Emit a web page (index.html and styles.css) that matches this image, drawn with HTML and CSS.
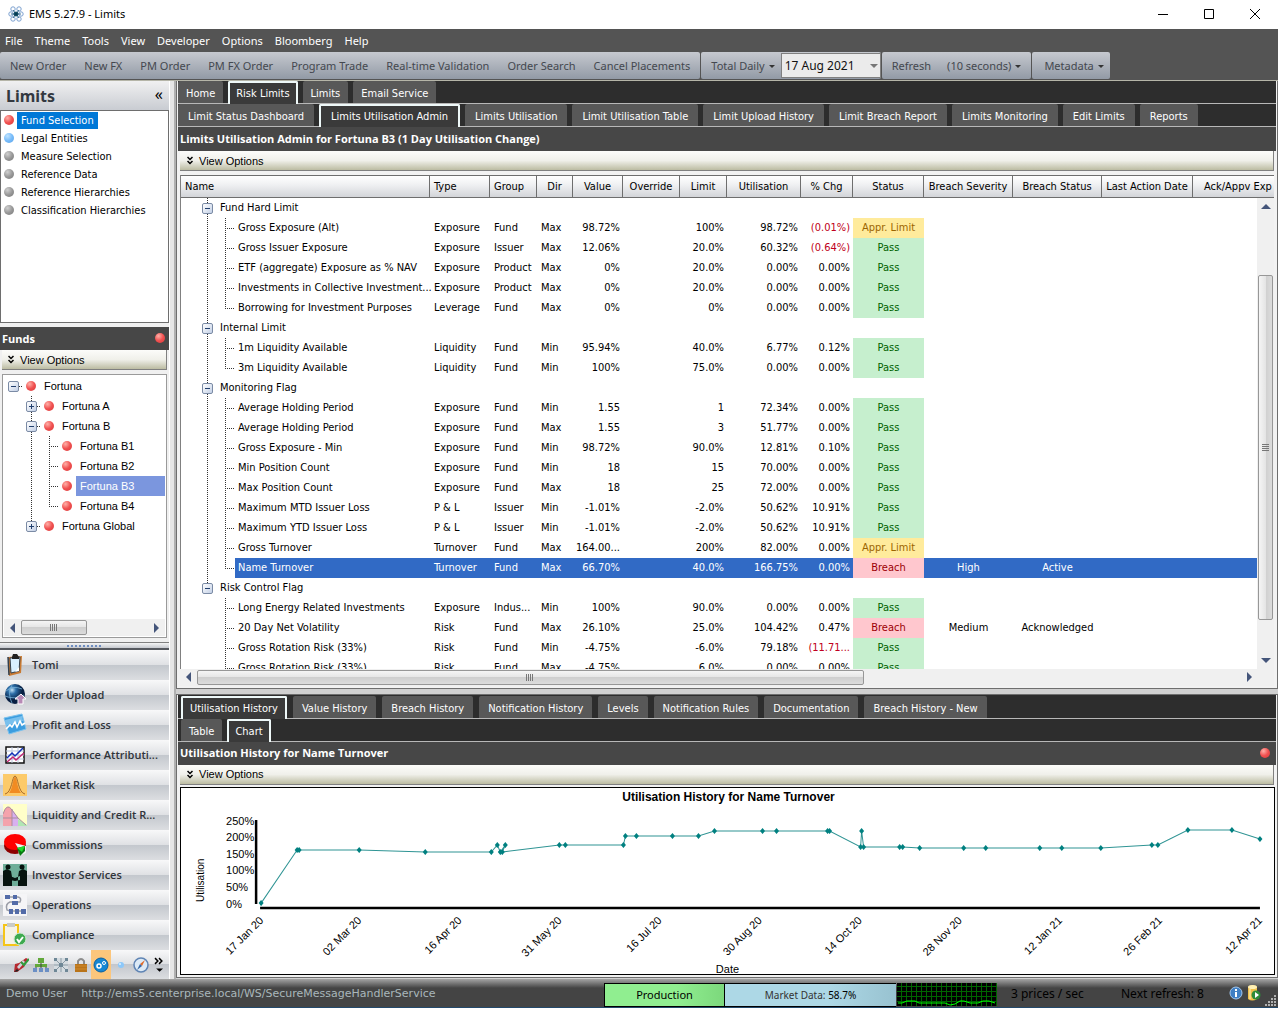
FILE: index.html
```html
<!DOCTYPE html>
<html lang="en">
<head>
    <meta charset="UTF-8">
    <meta name="viewport" content="width=device-width, initial-scale=1.0">
    <title>EMS 5.27.9 - Limits</title>
    <link rel="stylesheet" href="styles.css">
</head>
<body>
<div class="app">
    <header class="titlebar">
        <svg class="app-icon" width="16" height="16" viewBox="0 0 16 16" fill="#fff" stroke="#7ba0cf">
            <circle cx="5" cy="3" r="2.2"/><circle cx="11" cy="3" r="2.2"/><circle cx="3" cy="8" r="2.2"/>
            <circle cx="13" cy="8" r="2.2"/><circle cx="5" cy="13" r="2.2"/><circle cx="11" cy="13" r="2.2"/>
            <path d="M5 4l6 8M11 4l-6 8M3 8h10" stroke="#3d7191"/><circle cx="8" cy="8" r="2" fill="#053b52" stroke="#0c4a63"/>
        </svg>
        <span class="window-title">EMS 5.27.9 - Limits</span>
        <button class="win-btn" aria-label="Minimize"><svg width="10" height="10"><path d="M0 5.5h10" stroke="#000"/></svg></button>
        <button class="win-btn" aria-label="Maximize"><svg width="10" height="10"><path d="M.5.5h9v9h-9z" fill="none" stroke="#000"/></svg></button>
        <button class="win-btn" aria-label="Close"><svg width="10" height="10"><path d="M0 0l10 10M10 0L0 10" stroke="#000"/></svg></button>
    </header>

    <nav class="menubar">
        <button>File</button><button>Theme</button><button>Tools</button><button>View</button><button>Developer</button><button>Options</button><button>Bloomberg</button><button>Help</button>
    </nav>

    <div class="toolbar">
        <div class="tool-group tool-orders">
            <button>New Order</button><button>New FX</button><button>PM Order</button><button>PM FX Order</button><button>Program Trade</button><button>Real-time Validation</button><button>Order Search</button><button>Cancel Placements</button>
        </div>
        <div class="tool-group tool-date">
            <button class="drop">Total Daily</button>
            <span class="date-box"><select aria-label="Date"><option>17 Aug 2021</option></select></span>
        </div>
        <div class="tool-group">
            <button>Refresh</button><button class="drop">(10 seconds)</button>
        </div>
        <div class="tool-group">
            <button class="drop">Metadata</button>
        </div>
    </div>

    <div class="workspace">
        <aside class="sidebar">
            <div class="side-head"><h1>Limits</h1><button aria-label="Collapse">«</button></div>
            <ul class="side-list">
                <li><i class="dot red"></i><a href="#" class="selected">Fund Selection</a></li>
                <li><i class="dot blue"></i><a href="#">Legal Entities</a></li>
                <li><i class="dot"></i><a href="#">Measure Selection</a></li>
                <li><i class="dot"></i><a href="#">Reference Data</a></li>
                <li><i class="dot"></i><a href="#">Reference Hierarchies</a></li>
                <li><i class="dot"></i><a href="#">Classification Hierarchies</a></li>
            </ul>
            <div class="panel-title funds-title"><h2>Funds</h2><i class="dot red"></i></div>
            <button class="view-options"><svg width="6" height="9" viewBox="0 0 6 9"><path d="M.5 1L3 3.500 5.500 1M.5 5L3 7.500 5.500 5" fill="none" stroke="#000" stroke-width="1.500"/></svg>View Options</button>
            <div class="fund-box">
                <ul class="fund-tree">
                    <li><i class="box"></i><i class="stub"></i><i class="dot red"></i><span>Fortuna</span></li>
                    <li class="sub"><i class="pad"></i><i class="box plus"></i><i class="stub"></i><i class="dot red"></i><span>Fortuna A</span></li>
                    <li class="sub"><i class="pad"></i><i class="box"></i><i class="stub"></i><i class="dot red"></i><span>Fortuna B</span></li>
                    <li class="sub"><i class="pad deep"></i><i class="twig"></i><i class="dot red"></i><span>Fortuna B1</span></li>
                    <li class="sub"><i class="pad deep"></i><i class="twig"></i><i class="dot red"></i><span>Fortuna B2</span></li>
                    <li class="sub"><i class="pad deep"></i><i class="twig"></i><i class="dot red"></i><span class="selected">Fortuna B3</span></li>
                    <li class="sub"><i class="pad deep"></i><i class="twig end"></i><i class="dot red"></i><span>Fortuna B4</span></li>
                    <li class="sub last"><i class="pad"></i><i class="box plus"></i><i class="stub"></i><i class="dot red"></i><span>Fortuna Global</span></li>
                </ul>
                <div class="hscroll fund-scroll">
                    <button class="arrow left" aria-label="Scroll left"></button><div class="thumb"></div><div class="rest"></div><button class="arrow right" aria-label="Scroll right"></button>
                </div>
            </div>
            <div class="side-grip"></div>
            <nav class="modules">
                <a href="#"><svg viewBox="0 0 24 24"><path d="M5 4l14-1-1 17-12 3z" fill="#c97a32"/><path d="M7 5l10-1-1 14-8 2z" fill="#d9efff" stroke="#33404e"/><path d="M5 4l1 18" fill="none" stroke="#33404e" stroke-width="1.500"/><path d="M9 4l1-3h4l2 3v2H9z" fill="#222"/><path d="M12 19l4-5v4z" fill="#fff"/></svg>Tomi</a>
                <a href="#"><svg viewBox="0 0 24 24"><defs><radialGradient id="globe" cx=".35" cy=".3"><stop offset="0" stop-color="#c5e4f7"/><stop offset=".4" stop-color="#2c6ea8"/><stop offset="1" stop-color="#081f42"/></radialGradient></defs><circle cx="12" cy="11" r="10" fill="url(#globe)"/><path d="M3 8q7-6 16-2M2 13q9 4 19-1M9 2q-5 8 0 18" fill="none" stroke="#79b2d8" stroke-width=".8"/><path d="M18 11l5 5h-3v5h-5v-5h-3z" fill="#b789b5" stroke="#fff"/></svg>Order Upload</a>
                <a href="#"><svg viewBox="0 0 24 24"><path d="M1 5l18-4 4 15-17 5z" fill="#3c9ddf" stroke="#7cc2ee"/><path d="M2 7l17-4 1 5L3 13z" fill="#79c0ed"/><path d="M3 16l4-4 2 2 3-5 2 5 3-6 2 4 3-2" fill="none" stroke="#fff" stroke-width="1.600"/></svg>Profit and Loss</a>
                <a href="#"><svg viewBox="0 0 24 24"><path d="M3 4h18v16H3z" fill="#fff" stroke="#111" stroke-width="1.500"/><path d="M3 8h18M3 12h18M3 16h18M9 4v16M15 4v16" stroke="#b9c4dd"/><path d="M4 15l5-5 3 3 8-8" fill="none" stroke="#1231b8" stroke-width="1.500"/><path d="M4 19l6-5 3 3 8-7" fill="none" stroke="#c12672" stroke-width="1.500"/></svg>Performance Attributi...</a>
                <a href="#"><svg viewBox="0 0 24 24"><path d="M0 1h24v22H0z" fill="#fcca6a"/><path d="M6 20C10 15 10 4 12 4s2 11 6 16z" fill="#f18b22"/><path d="M2 21C9 20 9 3 12 3s3 17 10 18" fill="none" stroke="#a86a28"/></svg>Market Risk</a>
                <a href="#"><svg viewBox="0 0 24 24"><path d="M0 1h24v22H0z" fill="#ffffc9"/><path d="M0 23V11q4-12 9-4v16z" fill="#f4a3ac"/><path d="M9 23V6l6 9v8z" fill="#d8b0f0"/><path d="M15 23v-7l9 6v1z" fill="#b1e6b3"/><path d="M0 11q4-12 9-4l6 8 8 7M0 15h15M9 6v17" fill="none" stroke="#a98d9d"/></svg>Liquidity and Credit R...</a>
                <a href="#"><svg viewBox="0 0 24 24"><ellipse cx="12" cy="13" rx="11" ry="8" fill="#8d0000"/><ellipse cx="12" cy="9" rx="11" ry="8" fill="#f00"/><path d="M12 10l11 3v7l-7 3-1-8z" fill="#f0f0f1"/><path d="M14 15l8-2v5l-5 5z" fill="#0a7a12"/><path d="M14 15l8-2-3 6z" fill="#22d82c"/></svg>Commissions</a>
                <a href="#"><svg viewBox="0 0 24 24"><path d="M0 1h24v22H0z" fill="#6fae99"/><g fill="#07130f"><circle cx="5" cy="4" r="2.500"/><circle cx="19" cy="4" r="2.500"/><path d="M0 8l4-2 4 2 1 6v9H0zM24 8l-4-2-4 2-1 6v9h9zM7 13l5 2 5-2v4l-5 1-5-1z"/></g></svg>Investor Services</a>
                <a href="#"><svg viewBox="0 0 24 24"><path d="M0 1h24v22H0z" fill="#f5f5f7"/><path d="M3 4h12q4 1 2 5H7q-5 2-3 8l3 1h14" fill="none" stroke="#9b9ea7" stroke-width="1.500"/><path d="M2 2h5v4H2zM10 2h4v4h-4zM9 8h6v4H9zM6 16h4v5H6zM12 16h4v5h-4zM18 16h5v5h-5z" fill="#526ba8"/></svg>Operations</a>
                <a href="#"><svg viewBox="0 0 24 24"><path d="M1 2h14v20H1z" fill="#f5f2e6" stroke="#f5c518" stroke-width="2"/><path d="M4 0h8v4H4z" fill="#c9cbc8"/><circle cx="17" cy="16" r="6" fill="#3eaa50" stroke="#cfe8d1"/><path d="M14 16l2 3 4-5" fill="none" stroke="#fff" stroke-width="2"/></svg>Compliance</a>
            </nav>
            <div class="module-strip">
                <button aria-label="Launch"><svg viewBox="0 0 16 16"><path d="M1 15l1-8 4-1 7-5 2 1-4 8-7 5z" fill="#b52a30"/><path d="M4 10l6-7 2 2-6 7z" fill="#cfd3da"/><path d="M8 5l3 3 5-6" fill="none" stroke="#2e9d3c" stroke-width="2"/><path d="M1 15l3-3 2 2z" fill="#222"/></svg></button>
                <button aria-label="Hierarchy"><svg viewBox="0 0 16 16"><path d="M5 1h6v5H5zM2 7h12v3H2z" fill="#62a83b"/><path d="M8 6v5M3 10v3M13 10v3" stroke="#444"/><path d="M0 11h4v4H0zM6 11h4v4H6zM12 11h4v4h-4z" fill="#6b8fc5"/></svg></button>
                <button aria-label="Network"><svg viewBox="0 0 16 16"><path d="M1 1h14v14H1z" fill="#d5dce1"/><path d="M2 2l12 12M14 2L2 14M8 1v14M1 8h14" stroke="#8b9ba5"/><path d="M1 1h3v3H1zM12 1h3v3h-3zM1 12h3v3H1zM12 12h3v3h-3zM6 6h4v4H6z" fill="#6e8796"/></svg></button>
                <button aria-label="Lock"><svg viewBox="0 0 16 16"><path d="M5 8V4q3-4 6 0v4" fill="none" stroke="#8d8d8d" stroke-width="2"/><path d="M2 7h12v8H2z" fill="#b9741a"/><path d="M2 9h12M2 12h12" stroke="#d08a2c"/></svg></button>
                <button class="active" aria-label="Settings"><svg viewBox="0 0 16 16"><circle cx="8" cy="8" r="7" fill="#1687d3" stroke="#0a5fa0"/><circle cx="6" cy="9" r="2" fill="none" stroke="#fff" stroke-width="1.500"/><circle cx="11" cy="6" r="1.500" fill="none" stroke="#fff"/></svg></button>
                <button aria-label="Status"><svg viewBox="0 0 16 16"><circle cx="8" cy="8" r="3" fill="#8cc8fa"/><circle cx="7" cy="7" r="1" fill="#dcf0ff"/></svg></button>
                <button aria-label="Compass"><svg viewBox="0 0 16 16"><circle cx="8" cy="8" r="7" fill="#dceaf6" stroke="#5f84b4" stroke-width="1.500"/><path d="M12 3L9 9 7 7z" fill="#e06b2a"/><path d="M4 13l3-6 2 2z" fill="#3568a8"/></svg></button>
                <button class="more" aria-label="More"><svg viewBox="0 0 8 14"><path d="M.5 1L3 3.500.5 6M4 1l2.500 2.500L4 6" fill="none" stroke="#000" stroke-width="1.300"/><path d="M1.500 10h6L4.500 13z"/></svg></button>
            </div>
        </aside>

        <div class="splitter"></div>

        <main class="content">
            <section class="panel grid-panel">
                <nav class="tabs narrow">
                    <button>Home</button><button class="current">Risk Limits</button><button>Limits</button><button>Email Service</button>
                </nav>
                <nav class="tabs wide">
                    <button>Limit Status Dashboard</button><button class="current">Limits Utilisation Admin</button><button>Limits Utilisation</button><button>Limit Utilisation Table</button><button>Limit Upload History</button><button>Limit Breach Report</button><button>Limits Monitoring</button><button>Edit Limits</button><button>Reports</button>
                </nav>
                <div class="panel-title"><h2>Limits Utilisation Admin for Fortuna B3 (1 Day Utilisation Change)</h2></div>
                <button class="view-options"><svg width="6" height="9" viewBox="0 0 6 9"><path d="M.5 1L3 3.500 5.500 1M.5 5L3 7.500 5.500 5" fill="none" stroke="#000" stroke-width="1.500"/></svg>View Options</button>
                <div class="grid-wrap">
                    <table class="grid">
                        <colgroup><col class="c-name"><col class="c-type"><col class="c-group"><col class="c-dir"><col class="c-value"><col class="c-over"><col class="c-limit"><col class="c-util"><col class="c-chg"><col class="c-status"><col class="c-sev"><col class="c-sev"><col class="c-date"><col></colgroup>
                        <thead>
                            <tr><th>Name</th><th>Type</th><th>Group</th><th>Dir</th><th>Value</th><th>Override</th><th>Limit</th><th>Utilisation</th><th>% Chg</th><th>Status</th><th>Breach Severity</th><th>Breach Status</th><th>Last Action Date</th><th>Ack/Appv Exp</th></tr>
                        </thead>
                        <tbody>
                            <tr class="group"><td colspan="14"><i class="trunk"><i class="box"></i></i>Fund Hard Limit</td></tr>
                            <tr><td><i class="trunk"></i><i class="twig"></i>Gross Exposure (Alt)</td><td>Exposure</td><td>Fund</td><td>Max</td><td>98.72%</td><td></td><td>100%</td><td>98.72%</td><td class="neg">(0.01%)</td><td class="appr">Appr. Limit</td><td></td><td></td><td></td><td></td></tr>
                            <tr><td><i class="trunk"></i><i class="twig"></i>Gross Issuer Exposure</td><td>Exposure</td><td>Issuer</td><td>Max</td><td>12.06%</td><td></td><td>20.0%</td><td>60.32%</td><td class="neg">(0.64%)</td><td class="pass">Pass</td><td></td><td></td><td></td><td></td></tr>
                            <tr><td><i class="trunk"></i><i class="twig"></i>ETF (aggregate) Exposure as % NAV</td><td>Exposure</td><td>Product</td><td>Max</td><td>0%</td><td></td><td>20.0%</td><td>0.00%</td><td>0.00%</td><td class="pass">Pass</td><td></td><td></td><td></td><td></td></tr>
                            <tr><td><i class="trunk"></i><i class="twig"></i>Investments in Collective Investment...</td><td>Exposure</td><td>Product</td><td>Max</td><td>0%</td><td></td><td>20.0%</td><td>0.00%</td><td>0.00%</td><td class="pass">Pass</td><td></td><td></td><td></td><td></td></tr>
                            <tr><td><i class="trunk"></i><i class="twig end"></i>Borrowing for Investment Purposes</td><td>Leverage</td><td>Fund</td><td>Max</td><td>0%</td><td></td><td>0%</td><td>0.00%</td><td>0.00%</td><td class="pass">Pass</td><td></td><td></td><td></td><td></td></tr>
                            <tr class="group"><td colspan="14"><i class="trunk"><i class="box"></i></i>Internal Limit</td></tr>
                            <tr><td><i class="trunk"></i><i class="twig"></i>1m Liquidity Available</td><td>Liquidity</td><td>Fund</td><td>Min</td><td>95.94%</td><td></td><td>40.0%</td><td>6.77%</td><td>0.12%</td><td class="pass">Pass</td><td></td><td></td><td></td><td></td></tr>
                            <tr><td><i class="trunk"></i><i class="twig end"></i>3m Liquidity Available</td><td>Liquidity</td><td>Fund</td><td>Min</td><td>100%</td><td></td><td>75.0%</td><td>0.00%</td><td>0.00%</td><td class="pass">Pass</td><td></td><td></td><td></td><td></td></tr>
                            <tr class="group"><td colspan="14"><i class="trunk"><i class="box"></i></i>Monitoring Flag</td></tr>
                            <tr><td><i class="trunk"></i><i class="twig"></i>Average Holding Period</td><td>Exposure</td><td>Fund</td><td>Min</td><td>1.55</td><td></td><td>1</td><td>72.34%</td><td>0.00%</td><td class="pass">Pass</td><td></td><td></td><td></td><td></td></tr>
                            <tr><td><i class="trunk"></i><i class="twig"></i>Average Holding Period</td><td>Exposure</td><td>Fund</td><td>Max</td><td>1.55</td><td></td><td>3</td><td>51.77%</td><td>0.00%</td><td class="pass">Pass</td><td></td><td></td><td></td><td></td></tr>
                            <tr><td><i class="trunk"></i><i class="twig"></i>Gross Exposure - Min</td><td>Exposure</td><td>Fund</td><td>Min</td><td>98.72%</td><td></td><td>90.0%</td><td>12.81%</td><td>0.10%</td><td class="pass">Pass</td><td></td><td></td><td></td><td></td></tr>
                            <tr><td><i class="trunk"></i><i class="twig"></i>Min Position Count</td><td>Exposure</td><td>Fund</td><td>Min</td><td>18</td><td></td><td>15</td><td>70.00%</td><td>0.00%</td><td class="pass">Pass</td><td></td><td></td><td></td><td></td></tr>
                            <tr><td><i class="trunk"></i><i class="twig"></i>Max Position Count</td><td>Exposure</td><td>Fund</td><td>Max</td><td>18</td><td></td><td>25</td><td>72.00%</td><td>0.00%</td><td class="pass">Pass</td><td></td><td></td><td></td><td></td></tr>
                            <tr><td><i class="trunk"></i><i class="twig"></i>Maximum MTD Issuer Loss</td><td>P &amp; L</td><td>Issuer</td><td>Min</td><td>-1.01%</td><td></td><td>-2.0%</td><td>50.62%</td><td>10.91%</td><td class="pass">Pass</td><td></td><td></td><td></td><td></td></tr>
                            <tr><td><i class="trunk"></i><i class="twig"></i>Maximum YTD Issuer Loss</td><td>P &amp; L</td><td>Issuer</td><td>Min</td><td>-1.01%</td><td></td><td>-2.0%</td><td>50.62%</td><td>10.91%</td><td class="pass">Pass</td><td></td><td></td><td></td><td></td></tr>
                            <tr><td><i class="trunk"></i><i class="twig"></i>Gross Turnover</td><td>Turnover</td><td>Fund</td><td>Max</td><td>164.00...</td><td></td><td>200%</td><td>82.00%</td><td>0.00%</td><td class="appr">Appr. Limit</td><td></td><td></td><td></td><td></td></tr>
                            <tr class="selected"><td><i class="trunk"></i><i class="twig end"></i>Name Turnover</td><td>Turnover</td><td>Fund</td><td>Max</td><td>66.70%</td><td></td><td>40.0%</td><td>166.75%</td><td>0.00%</td><td class="breach">Breach</td><td>High</td><td>Active</td><td></td><td></td></tr>
                            <tr class="group"><td colspan="14"><i class="trunk end"><i class="box"></i></i>Risk Control Flag</td></tr>
                            <tr><td><i class="trunk none"></i><i class="twig"></i>Long Energy Related Investments</td><td>Exposure</td><td>Indus...</td><td>Min</td><td>100%</td><td></td><td>90.0%</td><td>0.00%</td><td>0.00%</td><td class="pass">Pass</td><td></td><td></td><td></td><td></td></tr>
                            <tr><td><i class="trunk none"></i><i class="twig"></i>20 Day Net Volatility</td><td>Risk</td><td>Fund</td><td>Max</td><td>26.10%</td><td></td><td>25.0%</td><td>104.42%</td><td>0.47%</td><td class="breach">Breach</td><td>Medium</td><td>Acknowledged</td><td></td><td></td></tr>
                            <tr><td><i class="trunk none"></i><i class="twig"></i>Gross Rotation Risk (33%)</td><td>Risk</td><td>Fund</td><td>Min</td><td>-4.75%</td><td></td><td>-6.0%</td><td>79.18%</td><td class="neg">(11.71...</td><td class="pass">Pass</td><td></td><td></td><td></td><td></td></tr>
                            <tr><td><i class="trunk none"></i><i class="twig"></i>Gross Rotation Risk (33%)</td><td>Risk</td><td>Fund</td><td>Max</td><td>-4.75%</td><td></td><td>6.0%</td><td>0.00%</td><td>0.00%</td><td class="pass">Pass</td><td></td><td></td><td></td><td></td></tr>
                        </tbody>
                    </table>
                    <div class="vscroll">
                        <button class="arrow up" aria-label="Scroll up"></button><div class="before"></div><div class="thumb"></div><div class="rest"></div><button class="arrow down" aria-label="Scroll down"></button>
                    </div>
                </div>
                <div class="hscroll grid-scroll">
                    <button class="arrow left" aria-label="Scroll left"></button><div class="thumb"></div><div class="rest"></div><button class="arrow right" aria-label="Scroll right"></button>
                </div>
            </section>

            <section class="panel chart-panel">
                <nav class="tabs">
                    <button class="current">Utilisation History</button><button>Value History</button><button>Breach History</button><button>Notification History</button><button>Levels</button><button>Notification Rules</button><button>Documentation</button><button>Breach History - New</button>
                </nav>
                <nav class="tabs narrow">
                    <button>Table</button><button class="current">Chart</button>
                </nav>
                <div class="panel-title"><h2>Utilisation History for Name Turnover</h2><i class="dot red"></i></div>
                <button class="view-options"><svg width="6" height="9" viewBox="0 0 6 9"><path d="M.5 1L3 3.500 5.500 1M.5 5L3 7.500 5.500 5" fill="none" stroke="#000" stroke-width="1.500"/></svg>View Options</button>
                <div class="chart-box">
                    <svg class="chart" viewBox="0 0 1092 186">
                        <defs><marker id="pt" markerWidth="6" markerHeight="6" refX="3" refY="3" markerUnits="userSpaceOnUse"><path d="M3 0l2.500 3L3 6 .5 3z" fill="#008080"/></marker></defs>
                        <text class="chart-title" x="547" y="13" text-anchor="middle">Utilisation History for Name Turnover</text>
                        <text x="45" y="37">250%</text>
                        <text x="45" y="53">200%</text>
                        <text x="45" y="70">150%</text>
                        <text x="45" y="86">100%</text>
                        <text x="45" y="103">50%</text>
                        <text x="45" y="120">0%</text>
                        <text class="axis-title" transform="translate(23 114) rotate(-90)">Utilisation</text>
                        <path d="M75 32v84M79 120h999" stroke="#000" stroke-width="2.500" fill="none"/>
                        <polyline class="series" points="80,115 116,62 118,62 178,62 244,64 310,64 316,57 319,64 324,57 321,64 378,57 384,57 442,57 444,48 455,48 491,48 517,48 533,43 581,43 595,43 646,43 648,43 679,59 680,43 682,59 718,59 721,59 738,60 782,60 804,60 858,60 880,60 919,60 970,57 976,57 1006,42 1050,42 1078,51"/>
                        <g class="dates" text-anchor="end">
                            <text transform="translate(83 133) rotate(-45)">17 Jan 20</text>
                            <text transform="translate(181 133) rotate(-45)">02 Mar 20</text>
                            <text transform="translate(281 133) rotate(-45)">16 Apr 20</text>
                            <text transform="translate(381 133) rotate(-45)">31 May 20</text>
                            <text transform="translate(481 133) rotate(-45)">16 Jul 20</text>
                            <text transform="translate(581 133) rotate(-45)">30 Aug 20</text>
                            <text transform="translate(681 133) rotate(-45)">14 Oct 20</text>
                            <text transform="translate(781 133) rotate(-45)">28 Nov 20</text>
                            <text transform="translate(881 133) rotate(-45)">12 Jan 21</text>
                            <text transform="translate(981 133) rotate(-45)">26 Feb 21</text>
                            <text transform="translate(1081 133) rotate(-45)">12 Apr 21</text>
                        </g>
                        <text x="546" y="185" text-anchor="middle">Date</text>
                    </svg>
                </div>
            </section>
        </main>
    </div>

    <footer class="statusbar">
        <span class="user">Demo User</span>
        <span class="url">http://ems5.centerprise.local/WS/SecureMessageHandlerService</span>
        <span class="env">Production</span>
        <span class="market">Market Data: <b>58.7%</b></span>
        <svg class="spark" width="100" height="23" viewBox="0 0 100 23">
            <defs><pattern id="mesh" width="5" height="5" patternUnits="userSpaceOnUse"><path d="M4.500 0v5M0 3.500h5" stroke="#006400"/></pattern></defs>
            <path d="M0 0h100v23H0z"/><path d="M0 0h100v23H0z" fill="url(#mesh)"/>
            <path d="M1 20h4l5-2h8l4 2h26l5 2 5-1 5-3h4l6 2h8l5-2h6l6 2" fill="none" stroke="#0f0"/>
        </svg>
        <span class="prices">3 prices / sec</span>
        <span class="refresh">Next refresh: 8</span>
        <svg class="info" width="14" height="14" viewBox="0 0 14 14"><circle cx="7" cy="7" r="6" fill="#3f7fc4" stroke="#a5c8ee"/><path d="M7 3v2M7 6v5" stroke="#fff" stroke-width="2"/></svg>
        <svg class="feed" width="14" height="18" viewBox="0 0 14 18"><path d="M1 3q5-4 9 0v12q-5 3-9 0z" fill="#f0c14b"/><ellipse cx="5.500" cy="3" rx="4.500" ry="2" fill="#fff0b5"/><path d="M3 5v10" stroke="#fff3c2"/><circle cx="9" cy="11" r="4.500" fill="#2e8b3a"/><path d="M8 8l4 3-4 3z" fill="#fff"/></svg>
        <svg class="grip" width="12" height="12" viewBox="0 0 12 12" fill="#b0b0b0"><path d="M9 0h2v2H9zM9 3h2v2H9zM6 3h2v2H6zM9 6h2v2H9zM6 6h2v2H6zM3 6h2v2H3zM9 9h2v2H9zM6 9h2v2H6zM3 9h2v2H3zM0 9h2v2H0z"/></svg>
    </footer>
</div>
</body>
</html>
```
FILE: styles.css
```css
* {
    box-sizing: border-box;
}

body {
    margin: 0;
    background-color: #fff;
    color: #000;
    font-family: "DejaVu Sans Condensed", "DejaVu Sans", sans-serif;
    font-size: 11px;
}

button {
    border: none;
    background: none;
    padding: 0;
    margin: 0;
    color: inherit;
    font: inherit;
    white-space: nowrap;
}

a {
    color: inherit;
    text-decoration: none;
}

h1, h2, ul {
    margin: 0;
    padding: 0;
    list-style: none;
}

.app {
    display: flex;
    flex-direction: column;
    height: calc(100vh - 16px);
    min-height: 700px;
    overflow: hidden;
}

/* title bar, menus, toolbar */
.titlebar {
    display: flex;
    align-items: center;
    height: 29px;
    padding: 0 0 2px 8px;
    font-family: "Noto Sans", sans-serif;
}

.window-title {
    flex: 1;
    padding-left: 5px;
}

.win-btn {
    width: 46px;
    height: 26px;
}

.win-btn svg {
    display: block;
    margin: auto;
}

.menubar {
    display: flex;
    gap: 12px;
    height: 23px;
    padding-left: 5px;
    background-color: #545454;
    color: #fff;
    font-family: "Noto Sans", sans-serif;
}

.toolbar {
    display: flex;
    gap: 1px;
    height: 29px;
    padding-bottom: 1px;
    background-color: #545454;
    border-bottom: 1px solid #b5b5a8;
    font-family: "Noto Sans", sans-serif;
    color: #44484f;
}

.tool-group {
    display: flex;
    align-items: center;
    gap: 16px;
    padding: 0 10px;
    border-radius: 2px;
    background: linear-gradient(#c6c9cf, #929aa6);
}

.tool-orders {
    gap: 18px;
}

.tool-date {
    gap: 6px;
    padding-right: 0;
}

.drop::after {
    content: "";
    display: inline-block;
    margin-left: 4px;
    vertical-align: 2px;
    border: 3px solid transparent;
    border-top-color: #333;
    border-bottom: 0;
}

.tool-group:last-child {
    padding: 0 6px 0 12px;
}

.date-box {
    position: relative;
}

.date-box::after {
    content: "";
    position: absolute;
    right: 3px;
    top: 11px;
    border: 4px solid transparent;
    border-top-color: #777;
    border-bottom: 0;
}

.date-box select {
    appearance: none;
    display: block;
    width: 100px;
    height: 25px;
    padding: 0 3px;
    border: 1px solid #808080;
    border-radius: 0;
    background-color: #ebebeb;
    color: #111;
    font: 12px "Noto Sans", sans-serif;
}

.workspace {
    display: flex;
    flex: 1;
    min-height: 0;
    background-color: #f0f0f0;
}

/* sidebar */
.sidebar {
    display: flex;
    flex-direction: column;
    width: 169px;
}

.side-head {
    display: flex;
    justify-content: space-between;
    align-items: center;
    height: 30px;
    padding: 0 6px;
    background: linear-gradient(#f0f0f1, #c9ccd2);
    border-bottom: 1px solid #6e6e6e;
    font-family: "Noto Sans", sans-serif;
}

.side-head h1 {
    font-size: 16px;
    color: #333840;
}

.side-head button {
    padding-bottom: 3px;
    font-size: 16px;
}

.side-list {
    flex: 1;
    background-color: #fff;
    border: 1px solid #6e6e6e;
    border-top: 0;
}

.side-list li {
    display: flex;
    align-items: center;
    gap: 3px;
    height: 18px;
    padding-left: 3px;
}

.side-list a {
    padding: 0 4px;
    line-height: 17px;
    white-space: nowrap;
}

.side-list a.selected {
    background-color: #0078d7;
    color: #fff;
}

.dot {
    flex: none;
    width: 10px;
    height: 10px;
    border-radius: 50%;
    background: radial-gradient(circle at 35% 30%, #d0d0d0, #999 50%, #777);
}

.dot.red {
    background: radial-gradient(circle at 35% 30%, #ffb0a8, #f05050 50%, #d83a3a);
}

.dot.blue {
    background: radial-gradient(circle at 35% 30%, #c0e4ff, #78bcfa 50%, #5aa2e8);
}

.panel-title {
    display: flex;
    align-items: center;
    justify-content: space-between;
    height: 24px;
    padding: 0 6px 1px 2px;
    background-color: #474747;
    color: #fff;
}

.panel-title h2 {
    font: 700 11px "Open Sans", "Noto Sans", sans-serif;
}

.funds-title {
    height: 23px;
    margin-top: 4px;
    padding: 0 4px 1px 2px;
}

.view-options {
    display: flex;
    align-items: center;
    flex: none;
    gap: 6px;
    height: 20px;
    margin: 0 2px;
    padding-left: 6px;
    border: solid #808080;
    border-width: 0 1px 1px 0;
    background: linear-gradient(#fcfcfa, #f0f0ea 50%, #bcbca2);
    font-family: "Liberation Sans", sans-serif;
}

.fund-box {
    display: flex;
    flex-direction: column;
    justify-content: space-between;
    height: 264px;
    margin: 4px 2px;
    padding: 1px;
    background-color: #fff;
    border: 1px solid #9a9a9a;
    font-family: "Liberation Sans", sans-serif;
}

.fund-tree {
    padding-left: 4px;
}

.fund-tree li {
    display: flex;
    align-items: center;
    height: 20px;
}

.fund-tree .sub {
    background: repeating-linear-gradient(#333 0 1px, transparent 1px 2px) 23px 0 / 1px 100% no-repeat;
}

.fund-tree .last {
    background-size: 1px 10px;
}

.fund-tree span {
    flex: 1;
    margin-left: 4px;
    padding-left: 4px;
    line-height: 20px;
}

.fund-tree .selected {
    background-color: #7b96de;
    color: #fff;
}

.fund-tree .pad {
    width: 18px;
}

.fund-tree .deep {
    width: 41px;
}

.fund-tree .stub {
    width: 7px;
    height: 1px;
    background: repeating-linear-gradient(90deg, #333 0 1px, transparent 1px 2px) 0 0 / 3px 1px no-repeat;
}

/* dotted tree lines and expander boxes */
.trunk, .twig {
    display: inline-block;
    height: 20px;
    vertical-align: top;
    background: repeating-linear-gradient(#333 0 1px, transparent 1px 2px) 0 0 / 1px 100% no-repeat;
}

.twig {
    width: 13px;
    background:
        repeating-linear-gradient(#333 0 1px, transparent 1px 2px) 0 0 / 1px 100% no-repeat,
        repeating-linear-gradient(90deg, #333 0 1px, transparent 1px 2px) 0 10px / 9px 1px no-repeat;
}

.twig.end {
    background-size: 1px 10px, 9px 1px;
}

.box {
    display: block;
    flex: none;
    width: 11px;
    height: 11px;
    border: 1px solid #7b8ba5;
    border-radius: 2px;
    background:
        linear-gradient(#22406e, #22406e) 2px 4px / 5px 1px no-repeat,
        linear-gradient(135deg, #fff, #c3d0e6);
}

.box.plus {
    background:
        linear-gradient(#22406e, #22406e) 2px 4px / 5px 1px no-repeat,
        linear-gradient(#22406e, #22406e) 4px 2px / 1px 5px no-repeat,
        linear-gradient(135deg, #fff, #c3d0e6);
}

.side-grip {
    height: 8px;
    border-top: 1px solid #808080;
    border-bottom: 2px solid #55585e;
    background: repeating-linear-gradient(90deg, #6d8cc0 0 2px, transparent 2px 4px) center / 35px 2px no-repeat, linear-gradient(#f5f5f5, #c5c8ce);
}

.modules a {
    display: flex;
    align-items: center;
    gap: 5px;
    height: 30px;
    padding: 0 0 1px 3px;
    background: linear-gradient(#f8f8f9, #dfe1e4 50%, #c3c7cd 50%, #dcdee1);
    color: #30343a;
    font: 600 11px "Open Sans", "Noto Sans", sans-serif;
    white-space: nowrap;
}

.modules svg {
    width: 24px;
    height: 24px;
}

.module-strip {
    display: flex;
    height: 29px;
    padding-left: 11px;
    background: linear-gradient(#f8f8f9, #dfe1e4 50%, #c3c7cd 50%, #dcdee1);
}

.module-strip button {
    width: 20px;
}

.module-strip svg {
    display: block;
    width: 16px;
    height: 16px;
    margin: auto;
}

.module-strip .active {
    background-color: #fcc67c;
}

.module-strip .more {
    width: 16px;
}

.splitter {
    width: 7px;
    border-left: 1px solid #fff;
    border-right: 2px solid #b0b0b0;
    background-color: #e6e6e6;
}

/* main panels */
.content {
    display: flex;
    flex-direction: column;
    flex: 1;
    gap: 5px;
    min-width: 0;
    padding-bottom: 1px;
    background-color: #d0d0d0;
}

.panel {
    display: flex;
    flex-direction: column;
    border: 1px solid #6e6e6e;
    background-color: #f2f2f2;
    padding: 0 1px 2px 1px;
}

.grid-panel {
    flex: 1;
    min-height: 0;
    border-top: 0;
}

.tabs {
    display: flex;
    flex: none;
    gap: 6px;
    height: 23px;
    background-color: #2d2d2d;
    border-bottom: 1px solid #b8b8b8;
    color: #fff;
}

.tabs button {
    padding: 3px 9px 0;
    border-radius: 2px 2px 0 0;
    background-color: #585858;
}

.tabs .current {
    margin-bottom: -1px;
    padding: 1px 7px 1px;
    border: 2px solid #eef8f8;
    border-bottom: 0;
    background-color: #3a3a3a;
}

.narrow,
.wide {
    gap: 5px;
}

.narrow button {
    padding-right: 8px;
    padding-left: 8px;
}

.narrow .current {
    padding-right: 6px;
    padding-left: 6px;
}

.wide button,
.wide .current {
    padding-right: 10px;
    padding-left: 10px;
}

.chart-panel .tabs {
    padding-left: 3px;
}

.chart-panel .tabs:first-child {
    height: 24px;
    padding-top: 1px;
}

.chart-panel .panel-title {
    height: 23px;
}

.grid-panel .view-options,
.chart-panel .view-options {
    padding-left: 7px;
}

.grid-wrap {
    position: relative;
    flex: 1;
    min-height: 0;
    margin: 4px 2px 0;
    overflow: hidden;
    border-left: 1px solid #808080;
    background-color: #fff;
}

.grid {
    width: 100%;
    border-collapse: separate;
    border-spacing: 0;
    table-layout: fixed;
}

.c-name { width: 249px; }
.c-type { width: 60px; }
.c-group { width: 47px; }
.c-dir { width: 36px; }
.c-value { width: 50px; }
.c-over { width: 57px; }
.c-limit { width: 47px; }
.c-util { width: 74px; }
.c-chg { width: 52px; }
.c-status { width: 71px; }
.c-sev { width: 89px; }
.c-date { width: 91px; }

.grid th {
    height: 23px;
    padding: 0;
    border: solid #6e6e6e;
    border-width: 1px 1px 1px 0;
    background: linear-gradient(#fff, #f0f1f3 40%, #d3d5d9);
    font-weight: normal;
    white-space: nowrap;
}

.grid th:first-child,
.grid th:nth-child(2),
.grid th:nth-child(3) {
    padding-left: 4px;
    text-align: left;
}

.grid th:last-child {
    padding-left: 11px;
    border-right: 0;
    text-align: left;
}

.grid td {
    height: 20px;
    padding: 0 0 0 4px;
    line-height: 20px;
    white-space: nowrap;
}

.grid td:first-child {
    padding-left: 26px;
}

.grid .trunk {
    width: 18px;
}

.grid .group .trunk {
    width: 13px;
}

.grid .box {
    margin: 5px 0 0 -5px;
}

.trunk.end {
    background-size: 1px 10px;
}

.grid .trunk.none {
    background: none;
}

.grid td:nth-child(5),
.grid td:nth-child(7),
.grid td:nth-child(8),
.grid td:nth-child(9) {
    padding: 0 3px 0 0;
    text-align: right;
}

.grid td:nth-child(n+10) {
    padding: 0;
    text-align: center;
}

.grid .neg {
    color: #c00020;
}

.grid .pass {
    background-color: #c6efce;
    color: #006100;
}

.grid .appr {
    background-color: #ffeb9c;
    color: #9c6500;
}

.grid .breach {
    background-color: #ffc7ce;
    color: #9c0006;
}

.grid .selected td:not(.breach) {
    background-color: #316ac5;
    color: #fff;
}

.grid .selected td:first-child {
    background: linear-gradient(90deg, #fff 54px, #316ac5 54px);
}

.vscroll {
    position: absolute;
    top: 23px;
    right: 0;
    bottom: 0;
    display: flex;
    flex-direction: column;
    width: 17px;
    background-color: #f0f0f0;
}

.vscroll .before { flex: 61; }
.vscroll .rest { flex: 32; }

.thumb {
    border: 1px solid #979797;
    border-radius: 2px;
}

.vscroll .thumb {
    flex: 347;
    margin: 0 1px;
    background:
        repeating-linear-gradient(#777 0 1px, transparent 1px 2px) center / 7px 7px no-repeat,
        linear-gradient(90deg, #f5f5f5, #e5e5e5 50%, #cfcfcf 50%, #dcdcdc);
}

.hscroll {
    display: flex;
    flex: none;
    height: 17px;
    background-color: #f0f0f0;
}

.hscroll .thumb {
    margin: 1px 0;
    background:
        repeating-linear-gradient(90deg, #777 0 1px, transparent 1px 2px) center / 8px 7px no-repeat,
        linear-gradient(#f5f5f5, #e5e5e5 50%, #cfcfcf 50%, #dcdcdc);
}

.grid-scroll {
    margin: 0 2px;
    padding-right: 16px;
}

.grid-scroll .thumb { flex: 666; }
.grid-scroll .rest { flex: 378; }
.fund-scroll .thumb { flex: 66; }
.fund-scroll .rest { flex: 62; }

.arrow {
    display: flex;
    align-items: center;
    justify-content: center;
    flex: 0 0 17px;
}

.arrow::before {
    content: "";
    border: 5px solid transparent;
}

.arrow.left::before { border-right-color: #44557a; border-left: 0; }
.arrow.right::before { border-left-color: #44557a; border-right: 0; }
.arrow.up::before { border-bottom-color: #44557a; border-top: 0; }
.arrow.down::before { border-top-color: #44557a; border-bottom: 0; }

/* chart */
.chart-box {
    margin: 2px 1px 0 2px;
    border: 1px solid #000;
    background-color: #fff;
}

.chart {
    display: block;
    width: 100%;
    font: 11px "Liberation Sans", sans-serif;
}

.chart-title {
    font-size: 12px;
    font-weight: bold;
}

.axis-title {
    font-size: 10px;
}

.series {
    fill: none;
    stroke: #2f9494;
    marker-start: url(#pt);
    marker-mid: url(#pt);
    marker-end: url(#pt);
}

/* status bar */
.statusbar {
    display: flex;
    align-items: center;
    height: 29px;
    padding: 0 1px 0 6px;
    background: linear-gradient(#a5a5a5, #444 9px);
    border-bottom: 1px solid #23496b;
    font: 12px "Noto Sans", sans-serif;
    white-space: nowrap;
}

.user, .url {
    color: #a9b7bb;
    font: 11px "DejaVu Sans", sans-serif;
}

.url {
    flex: 1;
    padding-left: 14px;
}

.env, .market {
    height: 24px;
    margin-top: 3px;
    border: solid #000;
    border-width: 1px 0 1px 1px;
    line-height: 22px;
    text-align: center;
    font-size: 11px;
}

.env {
    width: 120px;
    background: linear-gradient(90deg, #90ee90 60%, #7cd87c);
}

.market {
    width: 172px;
    background: linear-gradient(90deg, #add8e6 60%, #98c2d0);
    color: #333;
    font-size: 10px;
}

.market b {
    font-weight: normal;
    color: #000;
}

.spark {
    margin: 3px 14px 0 1px;
}

.prices {
    width: 110px;
}

.refresh {
    width: 108px;
}

.info {
    margin-right: 4px;
}

.feed {
    margin-right: 4px;
}

.grip {
    align-self: flex-end;
}
```
